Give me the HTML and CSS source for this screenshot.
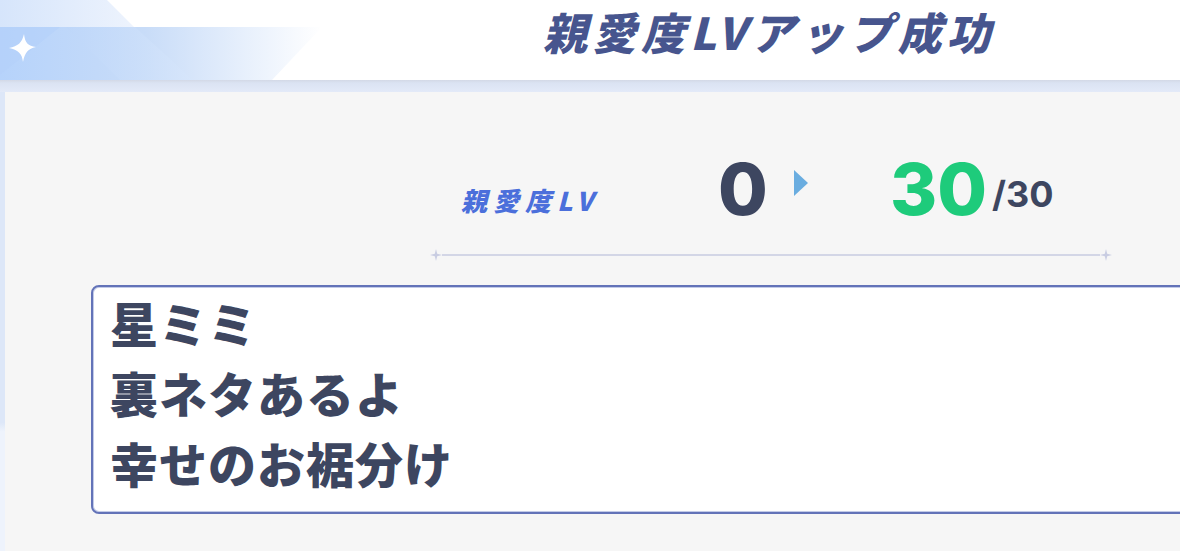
FILE: index.html
```html
<!DOCTYPE html>
<html lang="ja">
<head>
<meta charset="utf-8">
<title>親愛度LVアップ成功</title>
<link rel="stylesheet" href="styles.css">
</head>
<body>
<div class="screen">
  <header class="topbar">
    <svg class="deco" width="340" height="80" viewBox="0 0 340 80" aria-hidden="true">
      <defs>
        <linearGradient id="gTop" x1="0" y1="0" x2="1" y2="0">
          <stop offset="0" stop-color="#d6e5fb"/>
          <stop offset="1" stop-color="#edf3fd"/>
        </linearGradient>
        <linearGradient id="gBand" x1="0" y1="0" x2="1" y2="0">
          <stop offset="0" stop-color="#b6d3fb"/>
          <stop offset="0.45" stop-color="#c8dcf8"/>
          <stop offset="0.75" stop-color="#e6effc"/>
          <stop offset="1" stop-color="#ffffff"/>
        </linearGradient>
        <linearGradient id="gTri" x1="0" y1="0" x2="1" y2="0">
          <stop offset="0" stop-color="#bdd6f9"/>
          <stop offset="1" stop-color="#d7e6fb"/>
        </linearGradient>
      </defs>
      <polygon points="0,0 107,0 134,27 0,27" fill="url(#gTop)"/>
      <polygon points="0,27 322,27 272,80 0,80" fill="url(#gBand)"/>
      <polygon points="65,27 135,27 193,80 120,80" fill="url(#gTri)" opacity="0.7"/>
      <polygon points="0,27 60,27 0,75" fill="#b4d1fa" opacity="0.6"/>
      <path d="M24 34 C25 43 28 46 36 47 C28 49 25 52 23 62 C22 53 18 50 9 48 C18 46 22 43 24 34 Z" fill="#ffffff"/>
    </svg>
    <h1 class="title">親愛度LVアップ成功</h1>
  </header>
  <div class="band"></div>
  <div class="body">
    <div class="edge"></div>
    <main class="panel">
      <div class="lv-row">
        <span class="lv-label">親愛度LV</span>
        <span class="lv-from">0</span>
        <span class="lv-arrow"></span>
        <span class="lv-to">30</span>
        <span class="lv-max">/30</span>
      </div>
      <div class="divider">
        <svg class="spark" width="12" height="12" viewBox="0 0 12 12" aria-hidden="true"><path d="M6 0 L7.2 4.8 L12 6 L7.2 7.2 L6 12 L4.8 7.2 L0 6 L4.8 4.8 Z" fill="#c9cde2"/></svg>
        <span class="rule"></span>
        <svg class="spark" width="12" height="12" viewBox="0 0 12 12" aria-hidden="true"><path d="M6 0 L7.2 4.8 L12 6 L7.2 7.2 L6 12 L4.8 7.2 L0 6 L4.8 4.8 Z" fill="#c9cde2"/></svg>
      </div>
      <div class="msgbox">
        <p class="line">星ミミ</p>
        <p class="line">裏ネタあるよ</p>
        <p class="line">幸せのお裾分け</p>
      </div>
    </main>
  </div>
</div>
</body>
</html>
```
FILE: styles.css
```css
* { box-sizing: border-box; }
html, body { margin: 0; padding: 0; }
body {
  width: 1180px;
  height: 551px;
  overflow: hidden;
  background: #f6f6f6;
  font-family: "Noto Sans CJK JP", "Noto Sans", sans-serif;
}
.screen {
  width: 1180px;
  height: 551px;
  display: flex;
  flex-direction: column;
}
.topbar {
  position: relative;
  height: 80px;
  background: #ffffff;
  flex: none;
}
.deco {
  position: absolute;
  left: 0;
  top: 0;
}
.title {
  margin: 0;
  padding: 4px 0 0 543px;
  font-size: 44px;
  line-height: 54px;
  font-weight: 900;
  font-style: italic;
  letter-spacing: 5px;
  color: #47558e;
  white-space: nowrap;
}
.band {
  height: 12px;
  flex: none;
  background: linear-gradient(#d3d9e6 0, #dbe3f3 3px, #e3eaf8 100%);
}
.body {
  flex: 1;
  display: flex;
}
.edge {
  width: 5px;
  flex: none;
  background: linear-gradient(#dde7f8 0, #dde7f8 72%, #eef3fc 74%, #eef3fc 100%);
}
.panel {
  flex: 1;
  background: #f6f6f6;
  display: flex;
  flex-direction: column;
}
.lv-row {
  display: flex;
  align-items: flex-start;
  margin-top: 61px;
  padding-left: 456px;
  height: 80px;
}
.lv-label {
  width: 257px;
  margin-top: 34px;
  font-size: 26px;
  line-height: 26px;
  font-weight: 900;
  font-style: italic;
  letter-spacing: 6px;
  color: #4b6fdb;
  white-space: nowrap;
}
.lv-from, .lv-to {
  font-family: Inter, "Noto Sans", sans-serif;
  font-size: 72px;
  line-height: 72px;
  font-weight: 800;
  color: #3d4660;
}
.lv-to { color: #1ecb7b; }
.lv-arrow {
  width: 0;
  height: 0;
  margin: 17px 0 0 28px;
  border-top: 13px solid transparent;
  border-bottom: 13px solid transparent;
  border-left: 14px solid #6aade0;
}
.lv-from { width: 48px; }
.lv-to { margin-left: 82px; }
.lv-max {
  margin-top: 23px;
  margin-left: 5px;
  font-family: Inter, "Noto Sans", sans-serif;
  font-size: 36px;
  line-height: 36px;
  font-weight: 700;
  color: #3d4660;
}
.divider {
  display: flex;
  align-items: center;
  margin-top: 16px;
  margin-left: 425px;
  width: 682px;
  height: 12px;
}
.spark { flex: none; }
.rule {
  flex: 1;
  height: 2px;
  background: #d3d6e6;
}
.msgbox {
  margin-top: 24px;
  margin-left: 86px;
  width: 1110px;
  height: 229px;
  background: #ffffff;
  border: 2px solid #6373b8;
  border-radius: 8px;
  box-shadow: inset 0 0 0 1px #c3cbe8;
  padding: 0 0 0 17px;
}
.line {
  margin: 0;
  font-size: 48px;
  line-height: 70px;
  font-weight: 900;
  letter-spacing: 1px;
  color: #3d4660;
  white-space: nowrap;
}
```
